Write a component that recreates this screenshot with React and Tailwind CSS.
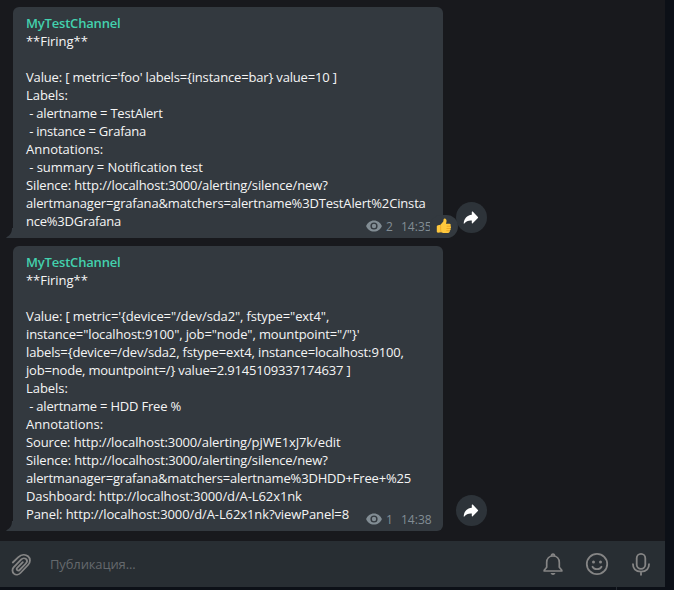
import React from "react";

const FIRST = [
  ["**Firing**", "tracking-[-0.05px]"],
  ["", ""],
  ["Value: [ metric='foo' labels={instance=bar} value=10 ]", "tracking-[-0.17px]"],
  ["Labels:", "tracking-[-0.05px]"],
  [" - alertname = TestAlert", "tracking-[-0.2px]"],
  [" - instance = Grafana", "tracking-[-0.22px]"],
  ["Annotations:", ""],
  [" - summary = Notification test", "tracking-[-0.07px]"],
  ["Silence: http://localhost:3000/alerting/silence/new?", "tracking-[-0.12px]"],
  ["alertmanager=grafana&matchers=alertname%3DTestAlert%2Cinsta", "tracking-[-0.16px]"],
  ["nce%3DGrafana", "tracking-[-0.22px]"],
];

const SECOND = [
  ["**Firing**", "tracking-[-0.05px]"],
  ["", ""],
  ["Value: [ metric='{device=\"/dev/sda2\", fstype=\"ext4\",", "tracking-[-0.12px]"],
  ["instance=\"localhost:9100\", job=\"node\", mountpoint=\"/\"}'", "tracking-[-0.12px]"],
  ["labels={device=/dev/sda2, fstype=ext4, instance=localhost:9100,", "tracking-[-0.145px]"],
  ["job=node, mountpoint=/} value=2.9145109337174637 ]", "tracking-[-0.19px]"],
  ["Labels:", "tracking-[-0.05px]"],
  [" - alertname = HDD Free %", "tracking-[-0.2px]"],
  ["Annotations:", ""],
  ["Source: http://localhost:3000/alerting/pjWE1xJ7k/edit", "tracking-[-0.11px]"],
  ["Silence: http://localhost:3000/alerting/silence/new?", "tracking-[-0.12px]"],
  ["alertmanager=grafana&matchers=alertname%3DHDD+Free+%25", "tracking-[-0.185px]"],
  ["Dashboard: http://localhost:3000/d/A-L62x1nk", "tracking-[-0.1px]"],
  ["Panel: http://localhost:3000/d/A-L62x1nk?viewPanel=8", "tracking-[-0.095px]"],
];

function Eye() {
  return (
    <svg className="h-[12px] w-[16px]" viewBox="0 0 16 12">
      <path
        fillRule="evenodd"
        fill="#828d94"
        d="M8 .4C4.300.4 1.400 2.700.1 6 1.400 9.300 4.300 11.600 8 11.600S14.600 9.300 15.900 6C14.600 2.700 11.700.4 8 .4ZM8 9.600A3.600 3.600 0 1 1 8 2.400 3.600 3.600 0 0 1 8 9.600Z"
      />
      <circle cx="8" cy="6" r="2.200" fill="#828d94" />
    </svg>
  );
}

function Thumb() {
  return (
    <svg className="mb-px h-[16px] w-[16px]" viewBox="0 0 16 16">
      <path
        fill="#ffc83d"
        d="M.8 8.500C.8 7.800 1.300 7.300 2 7.200L4.500 6.800 7.300 3.400 7.600 1.300C7.800.3 9.500.1 10.200 1.400 10.900 2.700 10.400 4.400 9.900 5.700L13.500 5.700C14.800 5.700 15.200 7.300 14.300 8 15.400 8.500 15.300 10 14.300 10.400 15 11.100 14.700 12.400 13.700 12.600 14.200 13.700 13.400 14.800 12.300 14.900 9.600 15.200 7.200 15.300 5.100 14.200L2 14.700C1.300 14.700.8 14.200.8 13.500Z"
      />
      <path
        fill="none"
        stroke="#e89b1c"
        strokeWidth=".7"
        d="M10.700 8.200H14.200M10.500 10.500H14.200M10.300 12.700H13.600M4.500 7C5 9 4.200 11.500 5.100 14.200"
      />
    </svg>
  );
}

function Share() {
  return (
    <button className="flex size-[31px] shrink-0 items-center justify-center rounded-full bg-[#2d3339]">
      <svg className="mr-px h-[14px] w-[16px]" viewBox="0 0 16 14">
        <path
          fill="#fff"
          d="M8.800.9C8.800.4 9.300.2 9.700.6L14.900 6C15.200 6.300 15.200 6.700 14.900 7L9.700 12.300C9.300 12.700 8.800 12.500 8.800 12V9.400C5.200 9.200 3.100 10.200 1.300 12.500 1 12.900.6 12.700.7 12.200 1.200 7.500 3.700 4.200 8.800 3.700Z"
        />
      </svg>
    </button>
  );
}

function Message({ lines, views, time, liked }) {
  return (
    <div className="flex items-end">
      <svg className="-mr-px h-[10px] w-[8px] shrink-0" viewBox="0 0 8 10">
        <path fill="#33393f" d="M8 0H6C6 4.500 4 7.800.4 9.200V10H8Z" />
      </svg>
      <div className="relative w-[430px] rounded-t-[6px] rounded-br-[6px] bg-[#33393f] px-[13px] pt-[7px] pb-2">
        <div className="text-[13px] leading-[18px] font-semibold tracking-[-0.19px] text-[#43d1ae]">MyTestChannel</div>
        {lines.map(([line, tracking], i) => (
          <div key={i} className={`h-[18px] text-[13px] leading-[18px] whitespace-pre text-[#f5f5f5] ${tracking}`}>
            {line}
          </div>
        ))}
        <div className="absolute right-[11px] bottom-[3px] flex h-[18px] items-center text-[12px] text-[#828d94]">
          <Eye />
          <span className="ml-1 w-[15px] pt-px">{views}</span>
          <span className={liked ? "w-[31px] pt-px [clip-path:inset(0_2px_0_0)]" : "w-[31px] pt-px"}>{time}</span>
        </div>
        {liked && (
          <div className="absolute right-[-15px] bottom-0 flex h-[23px] w-[28px] items-center justify-center rounded-full bg-[#33393f]">
            <Thumb />
          </div>
        )}
      </div>
      <div className="mb-[5px] ml-[13px]">
        <Share />
      </div>
    </div>
  );
}

function Composer() {
  return (
    <div className="flex h-[46px] w-full items-center bg-[#282e33] text-[#858585]">
      <svg className="mt-px ml-[10px] size-6" viewBox="0 0 24 24" fill="none" stroke="currentColor" strokeWidth="1.8" strokeLinecap="round">
        <path d="M2.800 9.500 8.400 4.200C11.500 1.200 15.500 1.100 18 3.300 20.600 5.500 20.600 9.200 18 12L10.400 20C8.600 21.900 5.800 22.200 3.900 20.600 2 18.900 2 16.200 3.800 14.200L11.300 6.400C12.700 5 14.900 4.900 16.200 6.200 17.400 7.400 17.200 9.100 15.900 10.500L9.600 17C8.900 17.700 7.900 17.700 7.200 17.100 6.500 16.500 6.500 15.600 7.200 14.900L12.800 9.200" />
      </svg>
      <span className="mt-px ml-4 flex-1 text-[13px] tracking-[-0.13px] text-[#65696d]">Публикация...</span>
      <svg className="size-6" viewBox="0 0 24 24" fill="none" stroke="currentColor" strokeWidth="1.700" strokeLinejoin="round">
        <path d="M3.200 19V18.200L5.700 15.300V10.500C5.700 6.700 8.200 4 12 4S18.300 6.700 18.300 10.500V15.300L20.800 18.200V19Z" />
        <path d="M10.500 4C10.500 2.600 11 2.100 12 2.100S13.500 2.600 13.500 4" />
        <path fill="currentColor" stroke="none" d="M9.500 21H14.500C14 22.300 13.200 22.900 12 22.900S10 22.300 9.500 21Z" />
      </svg>
      <svg className="ml-5 size-6" viewBox="0 0 24 24" fill="none" stroke="currentColor" strokeWidth="1.800">
        <circle cx="12" cy="12" r="10.200" />
        <circle cx="8.500" cy="10" r="1.500" fill="currentColor" stroke="none" />
        <circle cx="15.500" cy="10" r="1.500" fill="currentColor" stroke="none" />
        <path strokeLinecap="round" d="M7.500 14.800C9.300 18 14.700 18 16.500 14.800" />
      </svg>
      <svg className="mr-3 ml-5 size-6" viewBox="0 0 24 24" fill="none" stroke="currentColor" strokeWidth="1.800">
        <rect x="7.700" y="1.900" width="8.600" height="15" rx="4.300" />
        <path d="M3.900 11.500C3.900 16.700 7 19.600 12 19.600S20.100 16.700 20.100 11.500M12 19.500V23.500" />
      </svg>
    </div>
  );
}

export default function App() {
  return (
    <div className="h-[590px] w-[674px] overflow-hidden bg-[#0c1017] font-['Open_Sans','Noto_Sans',sans-serif]">
      <div className="flex h-[587px] w-[665px] flex-col justify-between bg-[#18191d]">
        <div className="flex flex-col gap-2 pt-[7px] pl-[6px]">
          <Message lines={FIRST} views="2" time="14:35" liked />
          <Message lines={SECOND} views="1" time="14:38" />
        </div>
        <Composer />
      </div>
      <div className="ml-[616px] h-[3px] w-px bg-[#252a31]" />
    </div>
  );
}
